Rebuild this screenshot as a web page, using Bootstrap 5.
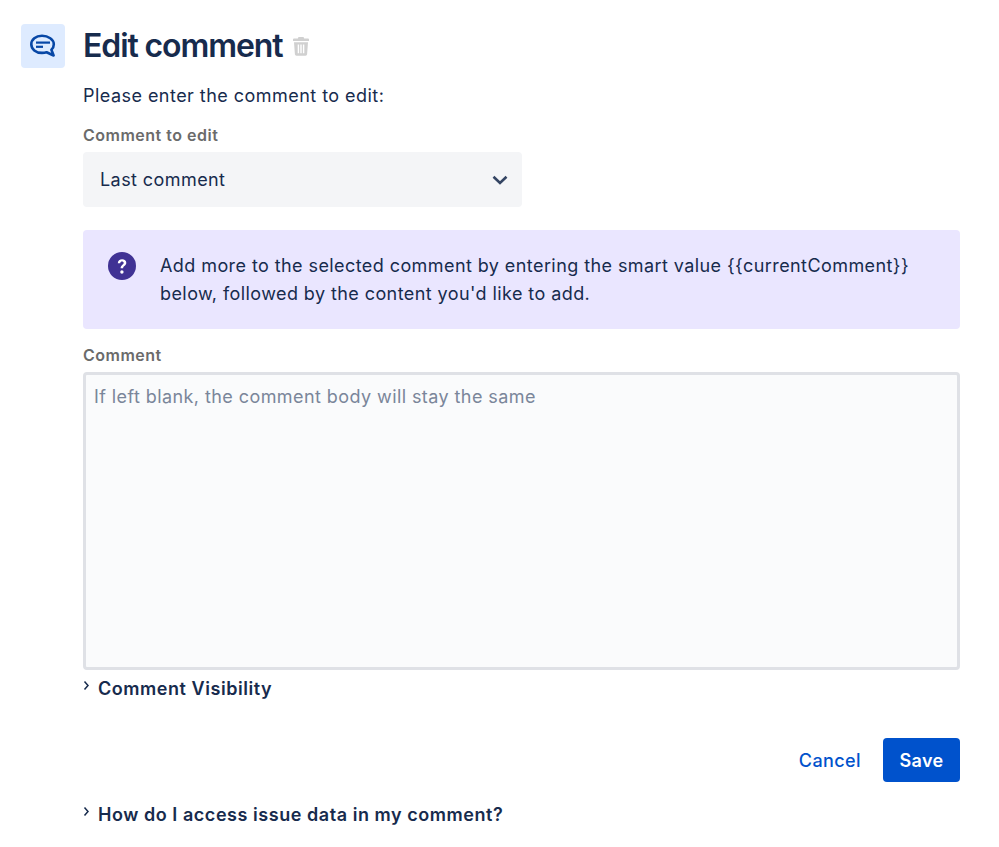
<!DOCTYPE html>
<html lang="en">
<head>
<meta charset="utf-8">
<title>Edit comment</title>
<link href="https://cdn.jsdelivr.net/npm/bootstrap@5.3.0/dist/css/bootstrap.min.css" rel="stylesheet">
<style>
html,body{height:100%;}
body{font-family:Inter,"Liberation Sans",sans-serif;color:#172b4d;background:#fff;font-size:18px;letter-spacing:.42px;overflow:hidden;}
.shell{padding:24px 39px 0 21px;gap:18px;}
.tile{width:44px;height:44px;background:#deebff;border-radius:4px;flex:none;}
.main-col{width:877px;}
.head-row{height:44px;gap:11px;}
.ttl{font-size:32px;font-weight:600;line-height:44px;letter-spacing:-1.1px;margin:0;color:#172b4d;}
.intro{font-size:18px;line-height:24px;margin:16px 0 0;letter-spacing:.46px;}
.lbl{display:block;font-size:16px;font-weight:600;color:#6b6b6b;line-height:20px;margin:0;letter-spacing:.5px;}
.lbl-a{margin-top:17px;}
.pick{width:439px;height:55px;background:#f4f5f7;border-radius:4px;padding:0 14px 0 17px;margin-top:7px;font-size:18px;}
.note{background:#eae6ff;border-radius:4px;height:99px;margin-top:23px;padding:22px 40px 0 25px;gap:24px;font-size:18px;line-height:28px;}
.note svg{flex:none;}
.lbl-b{margin-top:16px;}
.area.form-control{height:298px;margin-top:7px;background:#fafbfc;border:3px solid #dfe1e6;font-size:18px;line-height:24px;padding:10px 8px;border-radius:4px;color:#172b4d;letter-spacing:.42px;resize:none;}
.area.form-control::placeholder{color:#7a869a;opacity:1;}
.disc{font-size:18px;font-weight:600;line-height:24px;gap:8px;letter-spacing:.55px;}
.disc svg{flex:none;margin-top:-1px;}
.disc-a{margin-top:7px;}
.acts{margin-top:37px;gap:22px;}
.lnk{color:#0052cc;font-size:18px;font-weight:500;letter-spacing:.4px;text-decoration:none;}
.btn.sv{background:#0052cc;border:0;color:#fff;font-size:18px;font-weight:600;letter-spacing:.3px;width:77px;height:44px;border-radius:4px;padding:0;}
.disc-b{margin-top:21px;}
</style>
</head>
<body>
<div class="shell d-flex align-items-start">
  <div class="tile d-flex align-items-center justify-content-center">
    <svg width="28" height="28" viewBox="0 0 28 28" fill="none">
      <path d="M13 3.800c-6.300 0-10.700 3.700-10.700 8.500s4.400 8.600 10.700 8.600c1.700 0 3.200-.2 4.600-.7l7 3.300-2.200-5.800c1.700-1.400 2.400-3.300 2.400-5.400 0-4.800-5.500-8.500-11.800-8.500z" stroke="#0747a6" stroke-width="2.600" stroke-linejoin="round"/>
      <path d="M7 10.600h14" stroke="#0747a6" stroke-width="2.200"/>
      <path d="M7 14.800h7" stroke="#0747a6" stroke-width="2.200"/>
    </svg>
  </div>
  <div class="main-col">
    <div class="head-row d-flex align-items-center">
      <h1 class="ttl">Edit comment</h1>
      <svg width="16" height="20" viewBox="0 0 16 20" fill="#d0d0d0"><path d="M5.500 1h5l.7 1.600H15a1 1 0 0 1 1 1V5H0V3.600a1 1 0 0 1 1-1h3.800z"/><path fill-rule="evenodd" d="M1 6.300h14l-.9 12a1.500 1.500 0 0 1-1.500 1.400H3.400a1.500 1.500 0 0 1-1.500-1.400zM4.700 8.500v8.700h1.400V8.500zm2.600 0v8.700h1.400V8.500zm2.600 0v8.700h1.400V8.500z"/></svg>
    </div>
    <p class="intro">Please enter the comment to edit:</p>
    <label class="lbl lbl-a">Comment to edit</label>
    <div class="pick d-flex align-items-center justify-content-between">
      <span>Last comment</span>
      <svg width="16" height="10" viewBox="0 0 16 10" fill="none"><path d="M1.500 1.800 8 8l6.500-6.200" stroke="#344563" stroke-width="2.600"/></svg>
    </div>
    <div class="note d-flex">
      <svg width="28" height="28" viewBox="0 0 28 28"><circle cx="14" cy="14" r="14" fill="#403294"/><path d="M9.800 11.200c0-2.500 2-3.900 4.300-3.900 2.500 0 4.200 1.500 4.200 3.500 0 3-3.200 3-3.200 5.500h-2.500c0-3.500 3.100-3.600 3.100-5.400 0-.8-.7-1.400-1.700-1.400s-1.700.7-1.800 1.700z" fill="#fff"/><circle cx="13.900" cy="20" r="1.700" fill="#fff"/></svg>
      <div>Add more to the selected comment by entering the smart value {{currentComment}}<br>below, followed by the content you'd like to add.</div>
    </div>
    <label class="lbl lbl-b" for="cbody">Comment</label>
    <textarea id="cbody" class="area form-control" placeholder="If left blank, the comment body will stay the same"></textarea>
    <div class="disc disc-a d-flex align-items-start">
      <svg width="7" height="24" viewBox="0 0 7 24" fill="none"><path d="M1.500 5.500 5 9.500l-3.500 4" stroke="#172b4d" stroke-width="1.500"/></svg>
      <span>Comment Visibility</span>
    </div>
    <div class="acts d-flex justify-content-end align-items-center">
      <a class="lnk" href="#">Cancel</a>
      <button type="button" class="btn sv">Save</button>
    </div>
    <div class="disc disc-b d-flex align-items-start">
      <svg width="7" height="24" viewBox="0 0 7 24" fill="none"><path d="M1.500 5.500 5 9.500l-3.500 4" stroke="#172b4d" stroke-width="1.500"/></svg>
      <span>How do I access issue data in my comment?</span>
    </div>
  </div>
</div>
<script src="https://cdn.jsdelivr.net/npm/bootstrap@5.3.0/dist/js/bootstrap.bundle.min.js"></script>
</body>
</html>
